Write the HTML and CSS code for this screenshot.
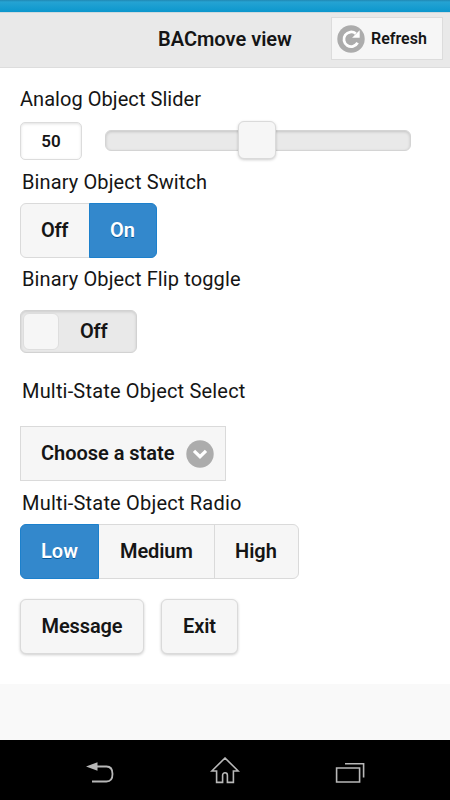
FILE: index.html
```html
<!DOCTYPE html>
<html lang="en">
<head>
<meta charset="utf-8">
<title>BACmove view</title>
<link rel="stylesheet" href="styles.css">
</head>
<body>
<div class="screen">
  <div class="status"></div>
  <header class="header">
    <h1 class="title">BACmove view</h1>
    <button class="refresh">
      <svg width="28" height="28" viewBox="0 0 28 28"><circle cx="14" cy="14" r="13.7" fill="#acacac"/><path d="M20.6 17.8A7.3 7.3 0 1 1 18.8 8.6" fill="none" stroke="#fff" stroke-width="2.8"/><path d="M22.7 5.2v7.6h-7.6z" fill="#fff"/></svg>
      <span>Refresh</span>
    </button>
  </header>
  <main class="content">
    <label class="label first">Analog Object Slider</label>
    <div class="slider-row">
      <div class="number">50</div>
      <div class="track"><div class="handle"></div></div>
    </div>
    <label class="label l-switch">Binary Object Switch</label>
    <div class="group switch"><div class="seg off">Off</div><div class="seg active on">On</div></div>
    <label class="label l-flip">Binary Object Flip toggle</label>
    <div class="flip"><div class="knob"></div><span class="flip-text">Off</span></div>
    <label class="label l-select">Multi-State Object Select</label>
    <div class="select"><span class="choose">Choose a state</span>
      <svg width="28" height="28" viewBox="0 0 28 28"><circle cx="14" cy="14" r="13.7" fill="#acacac"/><path d="M8 10.9l6 5.8 6-5.8" fill="none" stroke="#fff" stroke-width="3.3"/></svg>
    </div>
    <label class="label l-radio">Multi-State Object Radio</label>
    <div class="group radio"><div class="seg active low">Low</div><div class="seg medium">Medium</div><div class="seg high">High</div></div>
    <div class="actions"><button class="btn message">Message</button><button class="btn exit">Exit</button></div>
  </main>
  <div class="blank"></div>
  <nav class="nav">
    <svg width="30" height="26" viewBox="0 0 30 26" fill="none" stroke="#b8b8b8" stroke-width="1.8"><path d="M11 8.5h10.5q6 0 6 7.5t-6 7.5H7"/><path d="M1 8.5l11.5-4.3v8.6z" fill="#b8b8b8" stroke="none"/></svg>
    <svg width="30" height="28" viewBox="0 0 30 28" fill="none" stroke="#b8b8b8" stroke-width="1.6"><path d="M15 1L1.8 14h4.8v11.4h6v-7.2a2.4 2.4 0 0 1 4.8 0v7.2h6V14h4.8z"/></svg>
    <svg width="30" height="26" viewBox="0 0 30 26" fill="none" stroke="#b8b8b8" stroke-width="1.6"><path d="M1.6 10h23v14h-23z"/><path d="M10 5.7h18.6v13.8"/></svg>
  </nav>
</div>
</body>
</html>
```
FILE: styles.css
```css
* { box-sizing: border-box; }
body { margin: 0; font-family: Roboto, "Liberation Sans", sans-serif; color: #151515; }
button { font: inherit; color: inherit; padding: 0; }
.screen { width: 450px; height: 800px; display: flex; flex-direction: column; background: #fff; overflow: hidden; }
.status { height: 12px; flex: none; background: linear-gradient(#2188b2 0, #25a3d3 2px, #0c97cd 12px); }
.header { height: 56px; flex: none; display: grid; grid-template-columns: 331px 112px; align-items: start; background: #e9e9e9; border-top: 1px solid #cfd9dd; border-bottom: 1px solid #dddddd; }
.title { margin: 0; padding-left: 158px; font-size: 20px; line-height: 53px; font-weight: 600; white-space: nowrap; letter-spacing: 0; text-shadow: 0 1px 0 #eee; }
.refresh { margin-top: 4px; height: 43px; display: flex; align-items: center; padding-left: 5px; gap: 6px; background: #f6f6f6; border: 1px solid #dcdcdc; font-size: 16px; font-weight: 600; white-space: nowrap; }
.content { height: 616px; flex: none; padding: 19px 20px 0; display: flex; flex-direction: column; align-items: flex-start; }
.label { font-size: 20px; line-height: 24px; height: 24px; flex: none; margin-left: 2px; white-space: nowrap; letter-spacing: .12px; }
.first { margin-left: 0; letter-spacing: .05px; }
.slider-row { margin-top: 11px; height: 38px; display: flex; align-items: flex-start; gap: 23px; }
.number { width: 62px; height: 38px; border: 1px solid #dcdcdc; border-radius: 5px; background: #fff; box-shadow: inset 0 1px 3px rgba(0,0,0,.12); text-align: center; line-height: 36px; font-size: 17px; font-weight: 600; }
.track { width: 306px; height: 21px; margin-top: 8px; border: 1px solid #d4d4d4; border-radius: 6px; background: #e9e9e9; box-shadow: inset 0 1px 3px rgba(0,0,0,.16); display: flex; align-items: center; padding-left: 132px; }
.handle { width: 38px; height: 38px; flex: none; margin-bottom: 1px; border: 1px solid #dadada; border-radius: 6px; background: #f6f6f6; box-shadow: 0 1px 3px rgba(0,0,0,.2); }
.l-switch { margin-top: 10px; }
.group { display: flex; flex: none; height: 55px; border: 1px solid #dadada; border-radius: 6px; background: #f6f6f6; font-size: 20px; font-weight: 600; line-height: 52px; }
.seg { border-right: 1px solid #dadada; padding-left: 20px; white-space: nowrap; }
.seg:last-child { border-right: 0; }
.seg.active { color: #fff; background: #3388cc; border: 1px solid #1c80cc; margin: -1px; text-shadow: 0 1px 0 #005599; }
.switch { width: 137px; margin-top: 9px; }
.off { width: 69px; flex: none; letter-spacing: -.3px; }
.seg.on { width: 68px; flex: none; border-radius: 0 6px 6px 0; letter-spacing: -.1px; }
.l-flip { margin-top: 9px; }
.flip { width: 117px; height: 43px; margin-top: 19px; flex: none; display: flex; align-items: center; padding-left: 2px; border: 1px solid #d2d2d2; border-radius: 6px; background: #e9e9e9; box-shadow: inset 0 1px 3px rgba(0,0,0,.12); font-size: 20px; font-weight: 600; }
.knob { width: 36px; height: 37px; border: 1px solid #dedede; border-radius: 6px; background: #f6f6f6; }
.flip-text { margin-left: 21px; padding-bottom: 2px; letter-spacing: -.2px; }
.l-select { margin-top: 26px; letter-spacing: .18px; }
.select { width: 206px; height: 55px; margin-top: 23px; flex: none; display: flex; align-items: center; justify-content: space-between; padding: 0 11px 0 20px; border: 1px solid #dadada; background: #f6f6f6; font-size: 20px; font-weight: 600; }
.choose { white-space: nowrap; letter-spacing: -.03px; padding-bottom: 1px; }
.l-radio { margin-top: 10px; letter-spacing: .2px; }
.radio { width: 279px; margin-top: 9px; }
.low { width: 79px; flex: none; border-radius: 6px 0 0 6px; }
.medium { width: 117px; flex: none; padding-left: 22px; letter-spacing: -.1px; }
.actions { display: flex; gap: 17px; margin-top: 20px; }
.btn { height: 55px; border: 1px solid #dadada; border-radius: 6px; background: #f6f6f6; box-shadow: 0 1px 3px rgba(0,0,0,.2); padding-bottom: 2px; font-size: 20px; font-weight: 600; letter-spacing: -.1px; }
.message { width: 124px; }
.exit { width: 77px; }
.blank { flex: 1; background: #f9f9f9; }
.nav { height: 60px; flex: none; background: #000; display: flex; justify-content: space-between; align-items: center; padding: 2px 85px 0 85px; }
```
